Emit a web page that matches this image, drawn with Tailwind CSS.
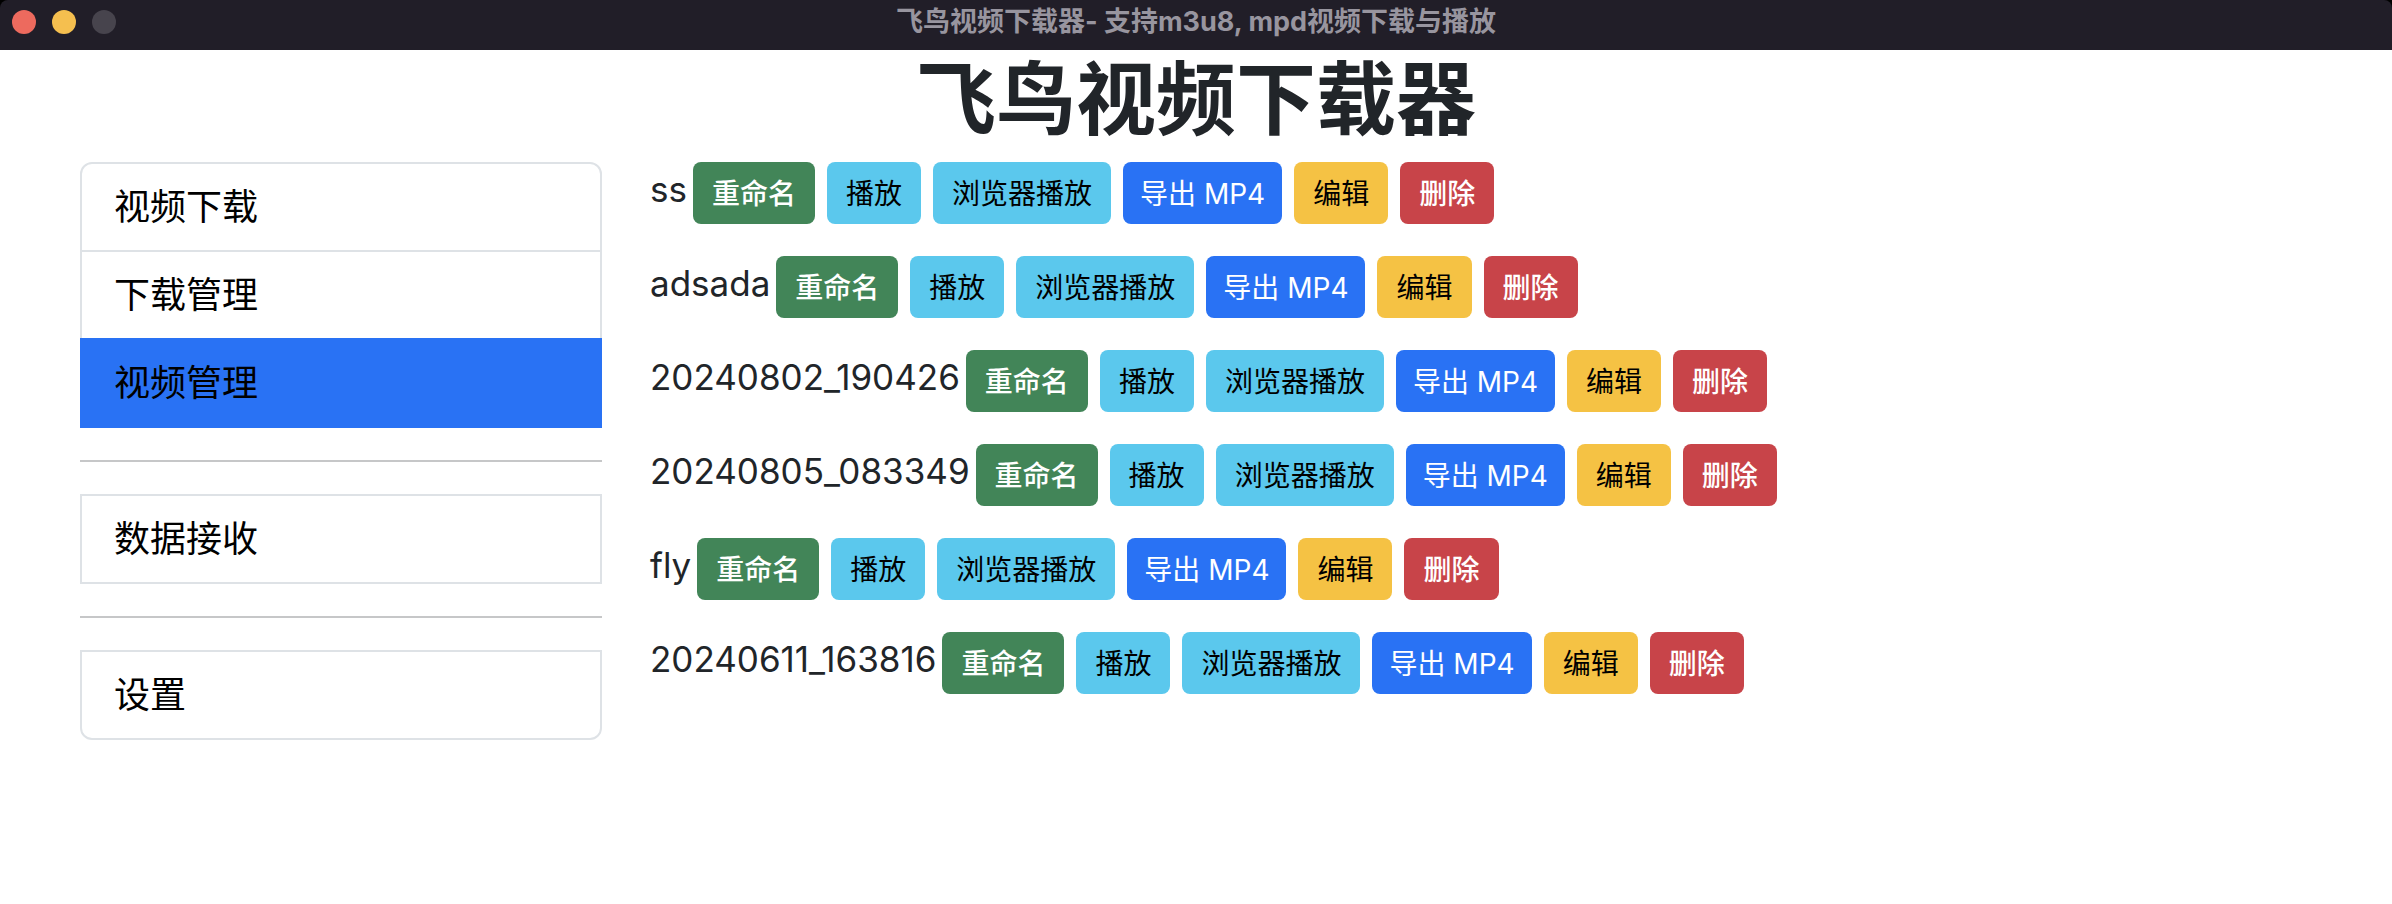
<!DOCTYPE html>
<html lang="zh-CN">
<head>
<meta charset="utf-8">
<title>飞鸟视频下载器</title>
<script src="https://cdn.jsdelivr.net/npm/@tailwindcss/browser@4"></script>
</head>
<body class="bg-white font-['Inter','Noto_Sans_CJK_SC',sans-serif] text-[#212529]">
  <div class="bg-black">
    <header class="grid h-[50px] grid-cols-[1fr_auto_1fr] items-center rounded-t-lg bg-[#211e28] px-3 pb-[6px]">
      <div class="flex gap-4">
        <button type="button" aria-label="关闭" class="size-6 rounded-full bg-[#ed6a5e]"></button>
        <button type="button" aria-label="最小化" class="size-6 rounded-full bg-[#f5bf4f]"></button>
        <button type="button" aria-label="缩放" disabled class="size-6 rounded-full bg-[#47444d]"></button>
      </div>
      <p class="text-[27px] leading-[40px] font-bold whitespace-nowrap text-[#98959f]">飞鸟视频下载器- 支持m3u8, mpd视频下载与播放</p>
    </header>
  </div>
  <div class="mx-auto max-w-[2280px]">
    <h1 class="mb-[14px] text-center text-[80px] leading-[98px] font-semibold">飞鸟视频下载器</h1>
    <div class="grid grid-cols-4">
      <nav class="px-6 text-[36px] leading-[54px] text-black">
        <a href="#download" class="block rounded-t-xl border-2 border-[#dee2e6] px-8 py-4">视频下载</a>
        <a href="#tasks" class="block border-x-2 border-[#dee2e6] px-8 py-4">下载管理</a>
        <a href="#videos" aria-current="page" class="block border-2 border-[#2972f4] bg-[#2972f4] px-8 py-4">视频管理</a>
        <hr class="my-8 border-t-2 border-[#c6c7c8]">
        <a href="#receive" class="block border-2 border-[#dee2e6] px-8 py-4">数据接收</a>
        <hr class="my-8 border-t-2 border-[#c6c7c8]">
        <a href="#settings" class="block rounded-b-xl border-2 border-[#dee2e6] px-8 py-4">设置</a>
      </nav>
      <main class="col-span-3 px-6">
        <ul id="videos" class="flex flex-col gap-8"></ul>
      </main>
    </div>
  </div>
  <template id="video-row">
    <li class="flex items-start gap-3 text-[28px] leading-[42px] whitespace-nowrap">
      <span class="-mr-[6px] text-[35px] leading-[54px]"></span>
      <button type="button" class="rounded-lg bg-[#428558] px-[19px] pt-[11px] pb-[9px] font-medium text-white">重命名</button>
      <button type="button" class="rounded-lg bg-[#5bc8ed] px-[19px] pt-[11px] pb-[9px] text-black">播放</button>
      <button type="button" class="rounded-lg bg-[#5bc8ed] px-[19px] pt-[11px] pb-[9px] text-black">浏览器播放</button>
      <button type="button" class="rounded-lg bg-[#2972f4] px-[17px] pt-[11px] pb-[9px] text-white">导出 MP4</button>
      <button type="button" class="rounded-lg bg-[#f5c244] px-[19px] pt-[11px] pb-[9px] text-black">编辑</button>
      <button type="button" class="rounded-lg bg-[#c84449] px-[19px] pt-[11px] pb-[9px] font-medium text-white">删除</button>
    </li>
  </template>
  <script>
    const names = ['ss', 'adsada', '20240802_190426', '20240805_083349', 'fly', '20240611_163816'];
    const row = document.getElementById('video-row');
    for (const name of names) {
      const item = row.content.cloneNode(true);
      item.querySelector('span').textContent = name;
      document.getElementById('videos').append(item);
    }
  </script>
</body>
</html>
